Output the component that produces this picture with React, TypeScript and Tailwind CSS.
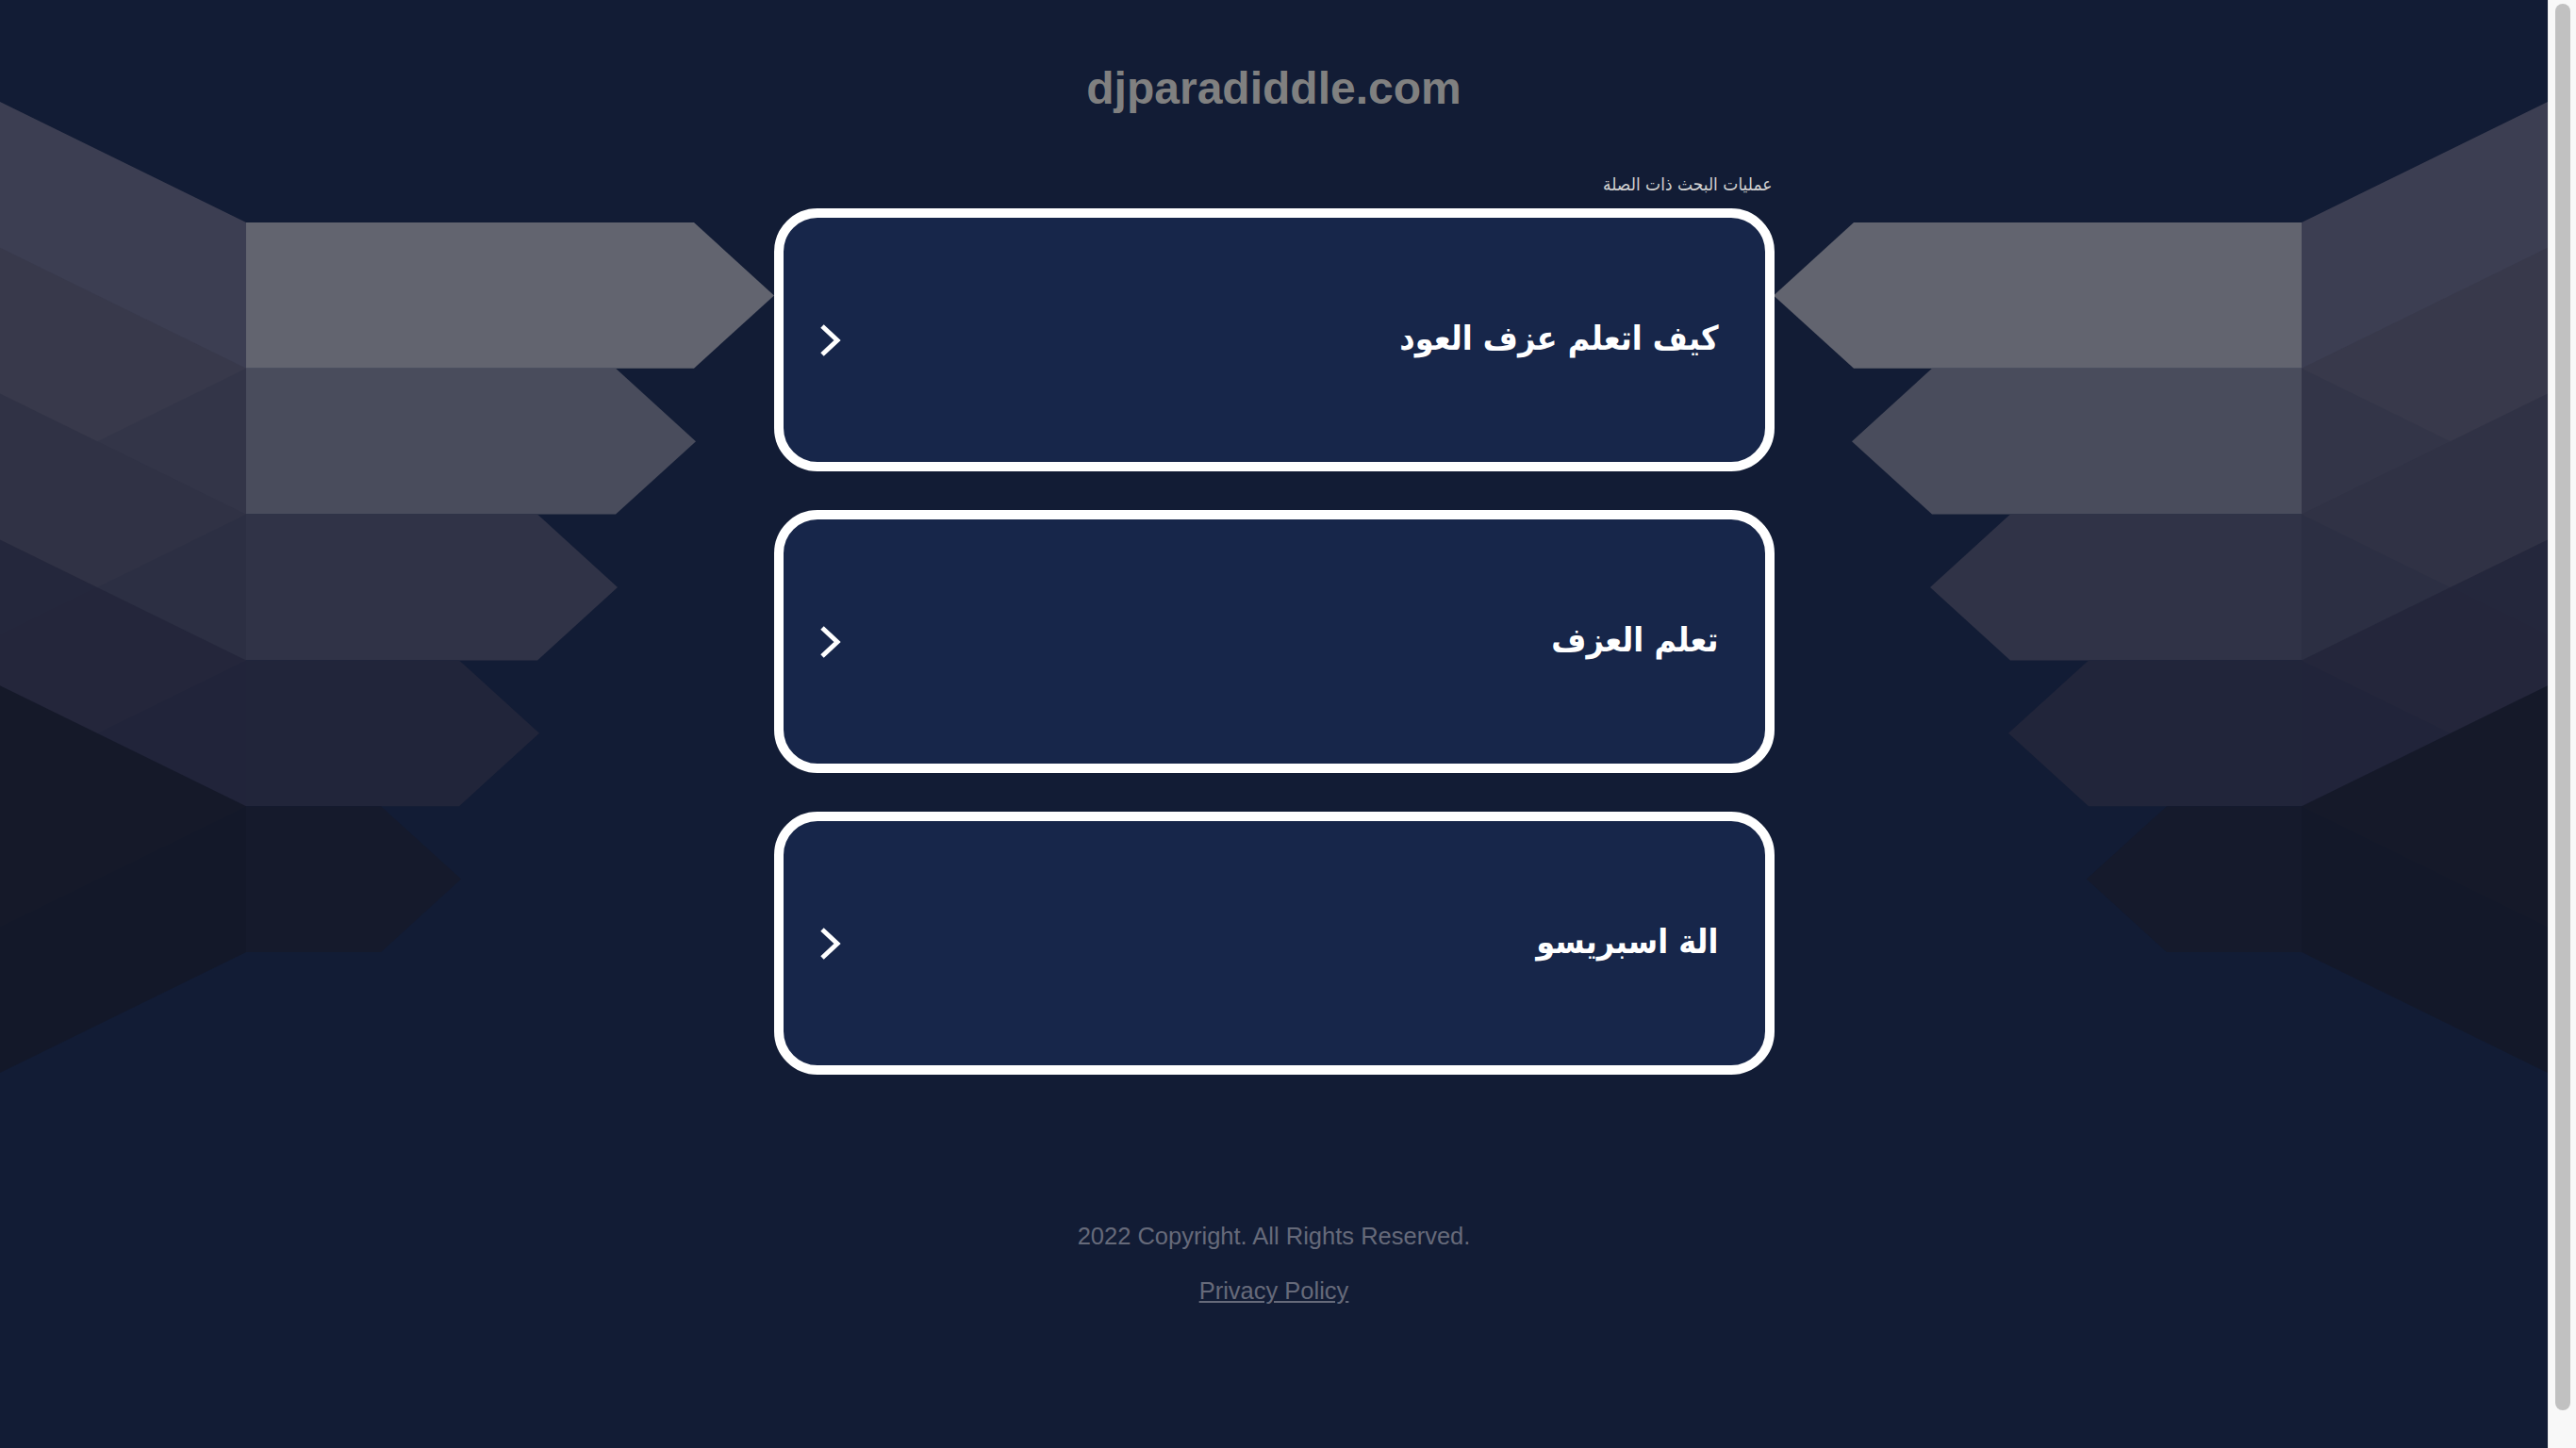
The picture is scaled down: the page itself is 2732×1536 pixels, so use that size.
import React from "react";

const TOP = 236;
const STEP = 154.8;
const ARROWS = ["#62646f", "#494c5c", "#303347", "#21253a", "#151a2c"];
const WINGS = ["#414355", "#37384a", "#303245", "#23263b", "#141828"];

const results = ["كيف اتعلم عزف العود", "تعلم العزف", "الة اسبريسو"];

function Ribbons() {
  const rows = ARROWS.map((fill, i) => {
    const t = TOP + STEP * i;
    const b = t + STEP;
    return { t, b, m: (t + b) / 2, r: 736 - 83 * i, fill, wing: WINGS[i] };
  });
  return (
    <g>
      {rows.map((row, i) => (
        <polygon
          key={`w${i}`}
          points={`0,${row.t - 128} 261,${row.t} 261,${row.b} 0,${row.b + 128}`}
          fill={row.wing}
          fillOpacity={0.9}
        />
      ))}
      {rows.map((row, i) => (
        <polygon
          key={`a${i}`}
          points={`261,${row.t} ${row.r},${row.t} ${row.r + 85},${row.m} ${row.r},${row.b} 261,${row.b}`}
          fill={row.fill}
        />
      ))}
    </g>
  );
}

function ResultCard({ title }: { title: string }) {
  return (
    <a
      href="#"
      dir="rtl"
      className="flex h-[279px] w-[1061px] items-center justify-between rounded-[46px] border-[10px] border-white bg-[#17264a] pr-[49px] pl-[37px]"
    >
      <span
        className="pb-[4px] text-[35.5px] font-bold leading-none text-white"
        style={{ fontFamily: '"DejaVu Sans Condensed", "DejaVu Sans", sans-serif' }}
      >
        {title}
      </span>
      <svg width="24" height="40" viewBox="0 0 24 40" fill="none">
        <polyline points="4,5 20,20 4,35" stroke="white" strokeWidth="5" strokeLinejoin="miter" />
      </svg>
    </a>
  );
}

export default function App() {
  return (
    <div
      className="flex h-screen w-full overflow-hidden bg-[#121c35]"
      style={{ fontFamily: '"Liberation Sans", Arial, "DejaVu Sans", sans-serif' }}
    >
      <main className="relative flex-1">
        <svg className="absolute inset-0 h-full w-full" viewBox="0 0 2702 1536" preserveAspectRatio="none">
          <Ribbons />
          <g transform="translate(2702,0) scale(-1,1)">
            <Ribbons />
          </g>
        </svg>

        <div className="relative flex flex-col items-center">
          <h1 className="mt-[66px] h-[56px] text-[48px] font-bold leading-[56px] text-[#808080]">djparadiddle.com</h1>

          <p
            dir="rtl"
            className="mt-[61px] w-[1061px] pr-[2px] text-[19px] leading-[24px] text-[#d0d0d0]"
            style={{ fontFamily: '"DejaVu Sans Condensed", "DejaVu Sans", sans-serif' }}
          >
            عمليات البحث ذات الصلة
          </p>

          <div className="mt-[14px] flex flex-col gap-[41px]">
            {results.map((title) => (
              <ResultCard key={title} title={title} />
            ))}
          </div>

          <p className="mt-[157px] text-[25.5px] leading-[28px] text-[#666a7a]">2022 Copyright. All Rights Reserved.</p>
          <a href="#" className="mt-[30px] text-[25.5px] leading-[28px] text-[#666a7a] underline">
            Privacy Policy
          </a>
        </div>
      </main>

      <div className="w-[30px] border-l border-[#ececec] bg-[#f8f8f8] pt-[4px]">
        <div className="ml-[7px] h-[1492px] w-[16px] rounded-full bg-[#c1c1c1]" />
      </div>
    </div>
  );
}
